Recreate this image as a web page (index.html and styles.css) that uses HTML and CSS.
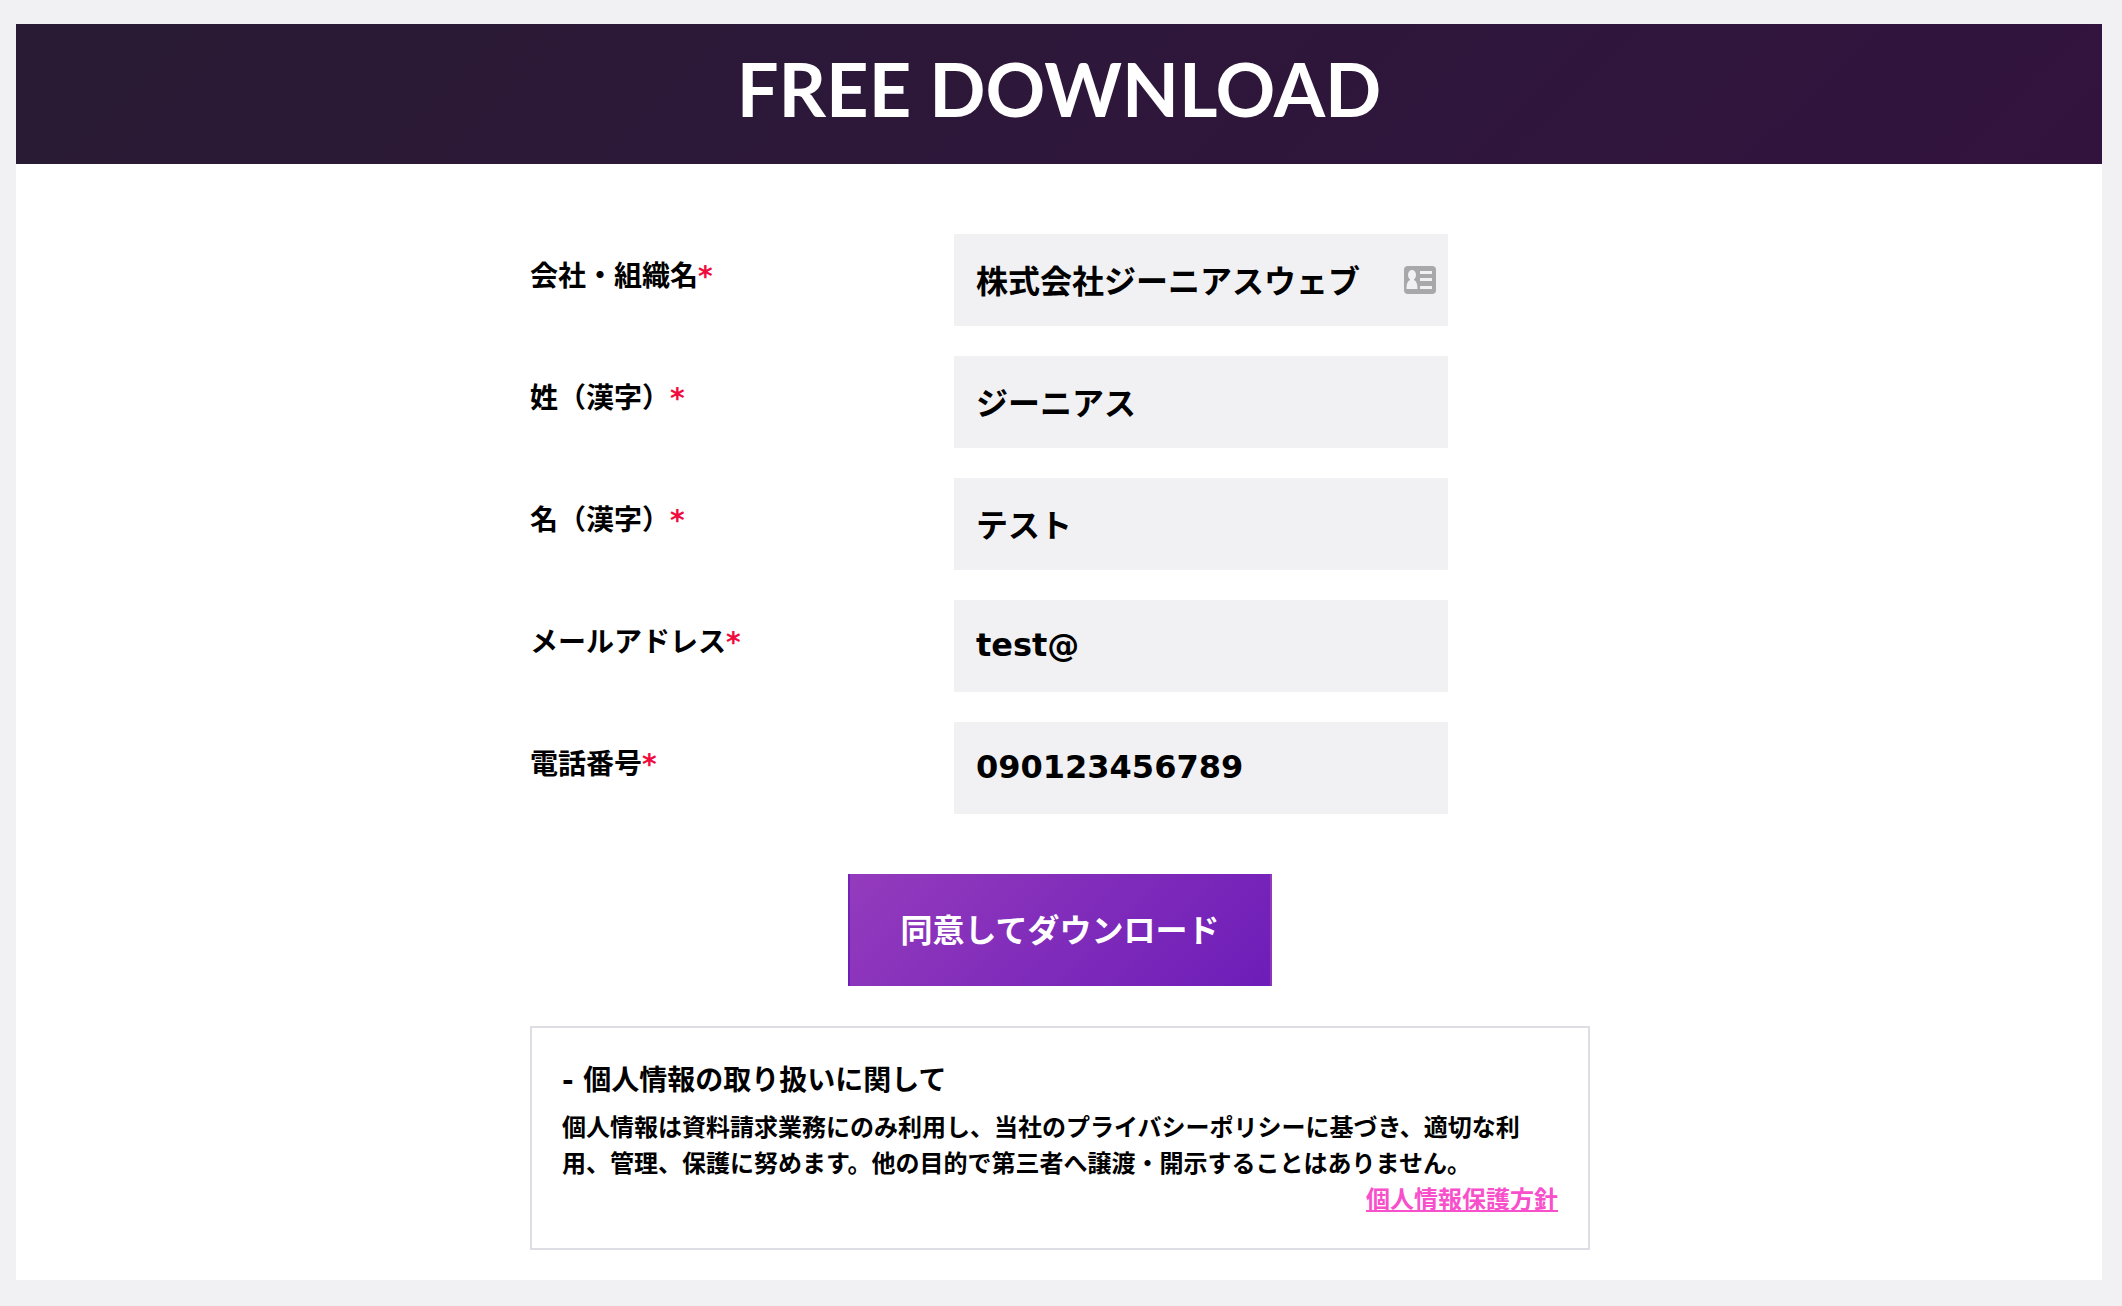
FILE: index.html
```
<!DOCTYPE html>
<html lang="ja">
<head>
    <meta charset="UTF-8">
    <meta name="viewport" content="width=device-width, initial-scale=1.0">
    <title>FREE DOWNLOAD</title>
    <link rel="stylesheet" href="styles.css">
</head>
<body>

    <main class="panel">
        <h1 class="panel-title">FREE DOWNLOAD</h1>
        <div class="panel-body">
            <form class="download-form">
                <div class="form-row">
                    <label for="company">会社・組織名<span class="required">*</span></label>
                    <div class="field">
                        <input type="text" id="company" name="company" value="株式会社ジーニアスウェブ">
                        <svg class="card-icon" viewBox="0 0 32 28" aria-hidden="true">
                            <rect width="32" height="28" rx="4" fill="#a8a8a8"/>
                            <g fill="#f1f1f3">
                                <ellipse cx="8" cy="9" rx="4" ry="5"/>
                                <path d="M6 12h4v2c2 1 3.500 3 3.500 9H2.500c0-6 1.500-8 3.500-9z"/>
                                <path d="M16 5h12v3H16zM16 12h12v3H16zM16 20h12v3H16z"/>
                            </g>
                        </svg>
                    </div>
                </div>
                <div class="form-row">
                    <label for="last-name">姓（漢字）<span class="required">*</span></label>
                    <div class="field"><input type="text" id="last-name" name="last-name" value="ジーニアス"></div>
                </div>
                <div class="form-row">
                    <label for="first-name">名（漢字）<span class="required">*</span></label>
                    <div class="field"><input type="text" id="first-name" name="first-name" value="テスト"></div>
                </div>
                <div class="form-row">
                    <label for="email">メールアドレス<span class="required">*</span></label>
                    <div class="field"><input type="text" id="email" name="email" value="test@"></div>
                </div>
                <div class="form-row">
                    <label for="tel">電話番号<span class="required">*</span></label>
                    <div class="field"><input type="tel" id="tel" name="tel" value="090123456789"></div>
                </div>
                <button type="submit" class="submit">同意してダウンロード</button>
            </form>

            <section class="privacy">
                <h2>- 個人情報の取り扱いに関して</h2>
                <p>個人情報は資料請求業務にのみ利用し、当社のプライバシーポリシーに基づき、適切な利用、管理、保護に努めます。他の目的で第三者へ譲渡・開示することはありません。</p>
                <p class="privacy-link"><a href="#">個人情報保護方針</a></p>
            </section>
        </div>
    </main>

</body>
</html>
```
FILE: styles.css
```
* { box-sizing: border-box; }
body {
    margin: 0;
    padding: 24px 20px 26px 16px;
    background-color: #f1f1f3;
    color: #000;
    font-family: "DejaVu Sans", "Noto Sans CJK JP", sans-serif;
    font-weight: bold;
}
h1, h2, p { margin: 0; }
.panel { background-color: #fff; }
.panel-title {
    padding: 15px 20px 25px;
    background: linear-gradient(135deg, #291b33, #2d173a 50%, #32133e);
    color: #fff;
    font-family: Lato, sans-serif;
    font-size: 74px;
    font-weight: bold;
    line-height: 100px;
    text-align: center;
}
.panel-body { padding: 70px 0 30px 2px; }
.download-form, .privacy {
    max-width: 1060px;
    margin: 0 auto;
}
.form-row {
    display: grid;
    grid-template-columns: 40% minmax(0, 494px);
    margin-bottom: 30px;
}
label {
    padding-top: 22px;
    font-size: 28px;
    line-height: 42px;
}
.required { color: #ef0b3d; }
.field { position: relative; }
input {
    display: block;
    width: 100%;
    height: 92px;
    padding: 0 22px 2px;
    border: 0;
    border-radius: 0;
    background-color: #f1f1f3;
    color: #000;
    font: inherit;
    font-size: 32px;
}
.card-icon {
    position: absolute;
    top: 32px;
    right: 12px;
    width: 32px;
    height: 28px;
}
.submit {
    display: block;
    width: 40%;
    min-width: 360px;
    height: 112px;
    margin: 60px auto 40px;
    padding: 0 0 4px;
    border: 2px solid transparent;
    border-width: 0 2px;
    background-image: linear-gradient(135deg, #943bbd, #6d1db8);
    color: #fff;
    font-family: "Noto Sans CJK JP", sans-serif;
    font-size: 32px;
    font-weight: bold;
    cursor: pointer;
}
.privacy {
    padding: 32px 30px 30px;
    border: 2px solid #dddde4;
    font-size: 24px;
    line-height: 36px;
}
.privacy h2 {
    margin-bottom: 8px;
    font-size: 28px;
    line-height: 42px;
}
.privacy-link { text-align: right; }
.privacy-link a { color: #f84fcb; }
```
